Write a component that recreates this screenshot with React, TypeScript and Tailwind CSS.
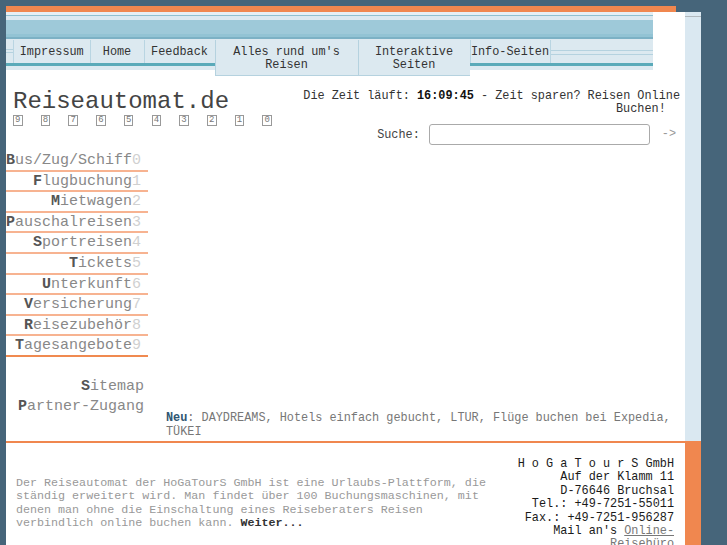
const navLeft = [
  ["B", "us/Zug/Schiff", "0"],
  ["F", "lugbuchung", "1"],
  ["M", "ietwagen", "2"],
  ["P", "auschalreisen", "3"],
  ["S", "portreisen", "4"],
  ["T", "ickets", "5"],
  ["U", "nterkunft", "6"],
  ["V", "ersicherung", "7"],
  ["R", "eisezubehör", "8"],
  ["T", "agesangebote", "9"],
];

function NavBand() {
  return (
    <div className="flex h-[58px] w-[647px] flex-col">
      <div className="h-[3px] bg-[#e6eff4]" />
      <div className="h-px bg-[#8fc0d0]" />
      <div className="h-[4px] bg-[#dce9f0]" />
      <div className="h-[14px] bg-[#9ec9d9]" />
      <div className="h-[3px] bg-[#92c3d4]" />
      <div className="h-[2px] bg-[#7cb1c5]" />
      <div className="h-px bg-[#dce9f0]" />
      <div className="flex h-[30px] items-start whitespace-nowrap bg-[linear-gradient(to_bottom,#dce9f0_23px,#5aaab9_23px,#5aaab9_26px,#dce9f0_26px)] text-[11.85px] text-[#333]">
        <div className="h-[23px] w-[7px] shrink-0">
          <div className="mt-[9px] h-[4px] border-y border-[#b5d2df]" />
        </div>
        <div className="flex h-[23px] w-[76.5px] shrink-0 items-center justify-center border-l border-[#b9d5e2] pt-[2px]">Impressum</div>
        <div className="flex h-[23px] w-[54px] shrink-0 items-center justify-center border-l border-[#b9d5e2] pt-[2px]">Home</div>
        <div className="flex h-[23px] w-[71px] shrink-0 items-center justify-center border-l border-[#b9d5e2] pt-[2px]">Feedback</div>
        <div className="relative h-[36px] w-[143px] shrink-0 border-b border-l border-[#b5d2df] bg-[#dce9f0] pt-[6px] text-center leading-[13px]">
          Alles rund um's
          <br />
          Reisen
        </div>
        <div className="relative h-[36px] w-[112px] shrink-0 border-b border-l border-[#b5d2df] bg-[#dce9f0] pt-[6px] text-center leading-[13px]">
          Interaktive
          <br />
          Seiten
        </div>
        <div className="flex h-[23px] w-[81px] shrink-0 items-center justify-center border-x border-[#b9d5e2] pt-[2px]">Info-Seiten</div>
        <div className="h-[23px] flex-1">
          <div className="mt-[10px] h-[5px] border-y border-[#b5d2df]" />
        </div>
      </div>
    </div>
  );
}

export default function App() {
  return (
    <div className="h-[545px] w-[727px] overflow-hidden bg-[#46657a] pl-[6px] pt-[6px] font-['Liberation_Mono',monospace]">
      <div className="h-[6px] w-[670px] bg-[#f0874f]" />

      <div className="flex h-[429px] w-[695px]">
        <div className="flex w-[679px] flex-col bg-white">
          <div className="flex">
            <NavBand />
          </div>

          <div className="flex items-start justify-between pl-[7px] pr-[5px] pt-[19.5px]">
            <div>
              <div className="text-[24px] leading-[24px] text-[#444]">Reiseautomat.de</div>
              <div className="mt-[1.5px] flex w-[259px] justify-between">
                {["9", "8", "7", "6", "5", "4", "3", "2", "1", "0"].map((d) => (
                  <span
                    key={d}
                    className="flex h-[11px] w-[9.5px] items-center justify-center border border-[#999] text-[9px] leading-none text-[#777]"
                  >
                    {d}
                  </span>
                ))}
              </div>
            </div>

            <div className="flex flex-col items-end">
              <div className="text-right text-[11.85px] leading-[13.5px] text-[#333]">
                Die Zeit läuft: <b className="text-[#111]">16:09:45</b> - Zeit sparen? Reisen Online
                <br />
                Buchen!{"\u00a0\u00a0"}
              </div>
              <div className="mr-[4px] mt-[7.5px] flex items-center text-[11.85px] text-[#444]">
                <span className="pt-[2px]">Suche:</span>
                <input
                  type="text"
                  className="ml-[9px] h-[21px] w-[221px] rounded-[3px] border border-[#aaa] bg-white"
                />
                <span className="ml-[12px] pt-[1px] text-[#999]">-&gt;</span>
              </div>
            </div>
          </div>

          <div className="mt-[6px] flex flex-1">
            <div className="w-[142px] shrink-0 text-[15px]">
              {navLeft.map(([first, rest, num], i) => (
                <div
                  key={i}
                  className={`border-b-2 pr-[7px] pt-[2px] text-right leading-[16.6px] ${
                    i === navLeft.length - 1 ? "border-[#f08a50]" : "border-[#f7b391]"
                  }`}
                >
                  <b className="text-[#555]">{first}</b>
                  <span className="text-[#888]">{rest}</span>
                  <span className="text-[#d0d0d0]">{num}</span>
                </div>
              ))}
              <div className="mt-[20px] pr-[4px] text-right leading-[20px]">
                <div>
                  <b className="text-[#555]">S</b>
                  <span className="text-[#888]">itemap</span>
                </div>
                <div>
                  <b className="text-[#555]">P</b>
                  <span className="text-[#888]">artner-Zugang</span>
                </div>
              </div>
            </div>

            <div className="flex flex-1 flex-col justify-end pb-[2px] pl-[18px] pr-[8px] text-[11.85px] leading-[14px] text-[#777]">
              <p>
                <b className="text-[#2f5672]">Neu</b>: DAYDREAMS, Hotels einfach gebucht, LTUR, Flüge buchen bei Expedia,
                TÜKEI
              </p>
            </div>
          </div>
        </div>

        <div className="w-[16px] bg-[#dae8f1] pt-[4px]">
          <div className="border-t border-[#b0b8bd]" />
        </div>
      </div>

      <div className="flex h-[104px] w-[695px]">
        <div className="flex w-[679px] justify-between overflow-hidden border-t-2 border-[#f0874f] bg-white">
          <p className="pl-[10px] pt-[34px] text-[11.7px] leading-[13.4px] text-[#999]">
            Der Reiseautomat der HoGaTourS GmbH ist eine Urlaubs-Plattform, die
            <br />
            ständig erweitert wird. Man findet über 100 Buchungsmaschinen, mit
            <br />
            denen man ohne die Einschaltung eines Reiseberaters Reisen
            <br />
            verbindlich online buchen kann. <b className="text-[#333]">Weiter...</b>
          </p>
          <div className="pr-[11px] pt-[15px] text-right text-[11.85px] leading-[13.4px] text-[#1a1a1a]">
            H o G a T o u r S GmbH
            <br />
            Auf der Klamm 11
            <br />
            D-76646 Bruchsal
            <br />
            Tel.: +49-7251-55011
            <br />
            Fax.: +49-7251-956287
            <br />
            Mail an's <a className="text-[#777] underline">Online-</a>
            <br />
            <a className="text-[#777] underline">Reisebüro</a>
          </div>
        </div>
        <div className="w-[16px] bg-[#f0874f]" />
      </div>
    </div>
  );
}
